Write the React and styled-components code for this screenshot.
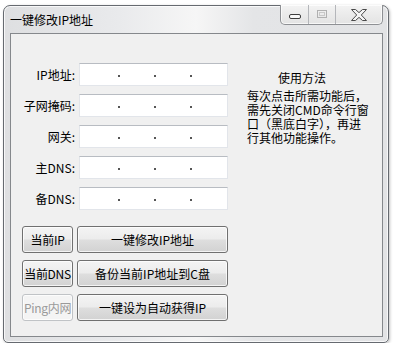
import React from 'react'
import styled, { createGlobalStyle } from 'styled-components';

const GlobalStyle = createGlobalStyle`
    html, body {
        margin: 0;
        padding: 0;
        background: #ffffff;
    }
    body {
        font-family: "Noto Sans CJK SC", "Noto Sans", sans-serif;
        font-size: 12px;
        color: #000;
    }
`

const fields = ['IP地址:', '子网掩码:', '网关:', '主DNS:', '备DNS:'];

const actions = [
    { small: '当前IP', big: '一键修改IP地址' },
    { small: '当前DNS', big: '备份当前IP地址到C盘' },
    { small: 'Ping内网', big: '一键设为自动获得IP', disabled: true },
];

function IpBox() {
    return (
        <IpField>
            <Part />
            <Dot />
            <Part />
            <Dot />
            <Part />
            <Dot />
            <Part />
        </IpField>
    )
}

function App() {
    return (
        <>
            <GlobalStyle />
            <Window>
                <TitleBar>
                    <Title>一键修改IP地址</Title>
                    <Caption>
                        <CapButton width={28}>
                            <MinGlyph />
                        </CapButton>
                        <CapButton width={27}>
                            <MaxGlyph />
                        </CapButton>
                        <CapButton width={46} last>
                            <svg width="16" height="12" viewBox="0 0 16 12">
                                <polygon
                                    points="0.5,0.5 4.5,0.5 8,3.6 11.5,0.5 15.5,0.5 10.3,6 15.5,11.5 11.5,11.5 8,8.4 4.5,11.5 0.5,11.5 5.7,6"
                                    fill="#f4f4f4"
                                    stroke="#4a4a4a"
                                    strokeWidth="1"
                                    strokeLinejoin="round"
                                />
                            </svg>
                        </CapButton>
                    </Caption>
                </TitleBar>
                <Client>
                    <LeftColumn>
                        <Form>
                            {fields.map((f) => (
                                <Row key={f}>
                                    <Label>{f}</Label>
                                    <IpBox />
                                </Row>
                            ))}
                        </Form>
                        <Actions>
                            {actions.map((a) => (
                                <ActionRow key={a.big}>
                                    <Button small disabled={a.disabled}>{a.small}</Button>
                                    <Button>{a.big}</Button>
                                </ActionRow>
                            ))}
                        </Actions>
                    </LeftColumn>
                    <Help>
                        <HelpTitle>使用方法</HelpTitle>
                        <HelpText>
                            每次点击所需功能后，<br />
                            需先关闭CMD命令行窗<br />
                            口（黑底白字），再进<br />
                            行其他功能操作。
                        </HelpText>
                    </Help>
                </Client>
            </Window>
        </>
    )
}

export default App;

const Window = styled.div`
    box-sizing: border-box;
    margin: 5px 0 0 3px;
    width: 386px;
    height: 338px;
    border: 1px solid #666a70;
    border-radius: 7px 7px 5px 5px;
    background: linear-gradient(90deg, #dedfe1 0%, #e9eaec 30%, #f6f6f6 50%, #e4e5e7 65%, #e2e3e5 100%);
    box-shadow: inset 0 0 0 1px rgba(255, 255, 255, 0.75), 1px 1px 3px rgba(0, 0, 0, 0.25);
    display: flex;
    flex-direction: column;
    padding: 0 5px 5px 6px;
`

const TitleBar = styled.div`
    height: 27px;
    display: flex;
    align-items: center;
`

const Title = styled.div`
    font-size: 12px;
    line-height: 14px;
    padding-left: 0;
    color: #000;
`

const Caption = styled.div`
    margin-left: auto;
    align-self: flex-start;
    margin-top: -1px;
    margin-right: 0px;
    display: flex;
    height: 20px;
    box-sizing: border-box;
    border: 1px solid #8e9094;
    border-top: none;
    border-radius: 0 0 5px 5px;
    overflow: hidden;
    background: linear-gradient(#f3f3f3, #e3e3e3);
    box-shadow: inset 0 0 0 1px rgba(255, 255, 255, 0.7);
`

const CapButton = styled.div`
    width: ${props => props.width}px;
    display: flex;
    align-items: center;
    justify-content: center;
    border-right: ${props => props.last ? 'none' : '1px solid #b4b6ba'};
    box-sizing: border-box;
`

const MinGlyph = styled.div`
    width: 12px;
    height: 5px;
    box-sizing: border-box;
    border: 1px solid #3d3d3d;
    border-radius: 2px;
    background: #f8f8f8;
    margin-top: 3px;
`

const MaxGlyph = styled.div`
    width: 10px;
    height: 8px;
    box-sizing: border-box;
    border: 1px solid #b0b0b0;
    margin-top: -2px;
    position: relative;
    &::after {
        content: '';
        position: absolute;
        left: 1px;
        right: 1px;
        top: 1px;
        bottom: 1px;
        border: 1px solid #c8c8c8;
    }
`

const Client = styled.div`
    flex: 1;
    display: flex;
    align-items: flex-start;
    border: 1px solid #85888c;
    background: #f0f0f0;
    padding: 29px 0 0 11px;
`

const LeftColumn = styled.div`
    width: 206px;
    display: flex;
    flex-direction: column;
`

const Form = styled.div`
    display: flex;
    flex-direction: column;
    gap: 8px;
`

const Row = styled.div`
    display: flex;
    align-items: center;
    height: 23px;
`

const Label = styled.div`
    width: 53px;
    margin-right: 4px;
    text-align: right;
    white-space: nowrap;
    font-size: 12px;
    color: #000;
`

const IpField = styled.div`
    box-sizing: border-box;
    width: 149px;
    height: 23px;
    background: #ffffff;
    border: 1px solid #e2e5ea;
    border-top-color: #b8bcc2;
    display: flex;
    align-items: center;
    padding-left: 4px;
`

const Part = styled.div`
    width: 34px;
    &:last-child {
        flex: 1;
    }
`

const Dot = styled.span`
    width: 2px;
    height: 2px;
    background: #555;
    margin-top: 3px;
`

const Actions = styled.div`
    display: flex;
    flex-direction: column;
    gap: 7px;
    margin-top: 16px;
`

const ActionRow = styled.div`
    display: flex;
    gap: 4px;
`

const Button = styled.div`
    box-sizing: border-box;
    height: 27px;
    width: ${props => props.small ? '51px' : '151px'};
    display: flex;
    align-items: center;
    justify-content: center;
    white-space: nowrap;
    font-size: 12px;
    letter-spacing: ${props => props.small ? '-0.3px' : '0'};
    border-radius: 3px;
    border: 1px solid ${props => props.disabled ? '#c0c3c6' : '#707070'};
    color: ${props => props.disabled ? '#9a9a9a' : '#000'};
    background: ${props => props.disabled
        ? '#f4f4f4'
        : 'linear-gradient(#f4f4f4 0%, #ececec 48%, #dedede 52%, #d2d2d2 100%)'};
    box-shadow: inset 0 0 0 1px rgba(255, 255, 255, 0.75);
`

const Help = styled.div`
    margin-left: 19px;
    margin-top: 8px;
    width: 122px;
    display: flex;
    flex-direction: column;
`

const HelpTitle = styled.div`
    font-size: 12px;
    line-height: 14px;
    padding-left: 31px;
    margin-bottom: 4px;
`

const HelpText = styled.div`
    font-size: 12px;
    line-height: 14px;
    white-space: nowrap;
`
